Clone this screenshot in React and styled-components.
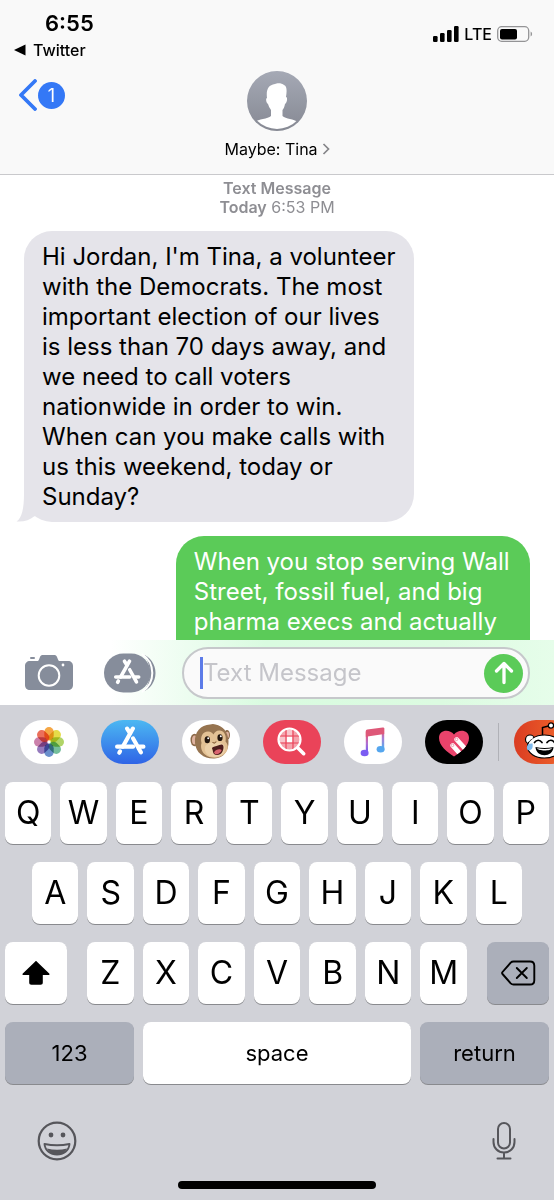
import React, { useState } from 'react';
import styled, { createGlobalStyle } from 'styled-components';

const GlobalStyle = createGlobalStyle`
	* {
		box-sizing: border-box;
	}
	body {
		margin: 0;
		background: #fff;
		color: #000;
		font-family: Inter, "Liberation Sans", sans-serif;
	}
	button, input {
		margin: 0;
		padding: 0;
		border: 0;
		background: none;
		color: inherit;
		font-family: inherit;
	}
	a {
		color: inherit;
		text-decoration: none;
	}
	svg {
		display: block;
		flex: none;
	}
`;

const Screen = styled.div`
	display: flex;
	flex-direction: column;
	height: 100vh;
	overflow: hidden;
`;

const Header = styled.header`
	flex: none;
	background: #f9f9f9;
	border-bottom: 1px solid #c9c9cc;
`;

const StatusBar = styled.div`
	display: flex;
	justify-content: space-between;
	padding: 9px 21px 0 14px;
`;

const Clock = styled.div`
	padding-left: 31px;
	font-size: 22px;
	line-height: 28px;
	font-weight: 600;
`;

const ReturnLink = styled.a`
	display: flex;
	align-items: center;
	gap: 7px;
	font-size: 16px;
	line-height: 26px;
	font-weight: 500;
`;

const Signals = styled.div`
	display: flex;
	align-items: center;
	gap: 5px;
	height: 16px;
	margin-top: 17px;
	font-size: 16px;
	line-height: 16px;
	font-weight: 500;
`;

const NavBar = styled.nav`
	display: grid;
	grid-template-columns: 1fr auto 1fr;
	padding: 8px 18px 14px;
`;

const BackLink = styled.a`
	display: flex;
	align-items: center;
	align-self: start;
	justify-self: start;
	gap: 1px;
	height: 48px;
`;

const Unread = styled.span`
	width: 27px;
	border-radius: 50%;
	background: #3478f6;
	color: #fff;
	font-size: 18px;
	line-height: 27px;
	text-align: center;
`;

const Contact = styled.button`
	display: flex;
	flex-direction: column;
	align-items: center;
	gap: 7px;
`;

const ContactName = styled.span`
	display: flex;
	align-items: center;
	gap: 4px;
	font-size: 16px;
	line-height: 22px;
`;

const Conversation = styled.main`
	flex: 1;
	display: flex;
	flex-direction: column;
	min-height: 0;
	padding: 4px 24px 0;
	overflow: hidden;
`;

const Stamp = styled.div`
	flex: none;
	margin-bottom: 14px;
	color: #8e8e93;
	font-size: 16px;
	line-height: 19px;
	text-align: center;

	strong {
		font-weight: 600;
	}
`;

const Bubble = styled.div`
	position: relative;
	flex: none;
	align-self: ${({ sent }) => (sent ? 'flex-end' : 'flex-start')};
	width: ${({ sent }) => (sent ? '70%' : '77%')};
	margin-bottom: 14px;
	padding: 11px 16px 10px 18px;
	border-radius: ${({ sent }) => (sent ? '28px 28px 0 0' : '28px')};
	background: ${({ sent }) => (sent ? '#5bcb58' : '#e5e4ea')};
	color: ${({ sent }) => (sent ? '#fff' : '#000')};
	font-size: 24px;
	line-height: 30px;
`;

const Tail = styled.svg`
	position: absolute;
	left: -8px;
	bottom: 0;
`;

const ComposeBar = styled.form`
	flex: none;
	display: flex;
	align-items: center;
	padding: 7px 24px 6px 25px;
	background: linear-gradient(to right, #fff 20%, #d9fbe0 48%, #dcfbe1 80%, #e6fdea);
`;

const ToolButton = styled.button`
	margin-right: ${({ gap }) => gap}px;
`;

const Field = styled.label`
	flex: 1;
	display: flex;
	align-items: center;
	min-width: 0;
	height: 52px;
	padding: 0 5px 0 16px;
	border: 2px solid #c6c8cb;
	border-radius: 26px;
	background: #fafafa;
`;

const Caret = styled.span`
	width: 3px;
	height: 32px;
	background: #5c7be8;
`;

const TextInput = styled.input`
	flex: 1;
	min-width: 0;
	font-size: 24px;
	line-height: 30px;
	outline: none;

	&::placeholder {
		color: #c5c5ca;
		opacity: 1;
	}
`;

const SendButton = styled.button`
	display: grid;
	place-items: center;
	width: 39px;
	height: 39px;
	border-radius: 50%;
	background: #5bcb58;
`;

const Keyboard = styled.section`
	flex: none;
	background: #d1d2d8;
`;

const AppStrip = styled.div`
	display: flex;
	align-items: center;
	gap: 23px;
	padding: 15px 0 18px 20px;
	overflow: hidden;
`;

const AppButton = styled.button`
	flex: none;
	display: grid;
	place-items: center;
	width: 58px;
	height: 44px;
	border-radius: 22px;
	background: ${({ fill }) => fill};
	overflow: hidden;
`;

const Divider = styled.span`
	flex: none;
	width: 1px;
	height: 38px;
	margin: 0 -8px;
	background: #b0b1b7;
`;

const KeyRows = styled.div`
	display: flex;
	flex-direction: column;
	gap: 18px;
	padding: 0 5px;
`;

const KeyRow = styled.div`
	display: flex;
	gap: ${({ gap }) => gap || 9}px;
	padding: 0 ${({ inset }) => inset || 0}px;
`;

const Letters = styled.div`
	flex: 1;
	display: flex;
	gap: 9px;
`;

const Key = styled.button`
	flex: ${({ size }) => (size ? `0 0 ${size}px` : '1 1 0')};
	display: grid;
	place-items: center;
	min-width: 0;
	height: 62px;
	border-radius: 8px;
	background: ${({ dark }) => (dark ? '#abafba' : '#fff')};
	box-shadow: 0 1px 0 #898a8e;
	font-size: ${({ word }) => (word ? 22 : 32)}px;
	line-height: 40px;
`;

const KeyboardFooter = styled.div`
	display: flex;
	align-items: center;
	justify-content: space-between;
	padding: 37px 38px 0 37px;
`;

const HomeIndicator = styled.div`
	width: 198px;
	height: 8px;
	margin: 20px auto 11px;
	border-radius: 4px;
	background: #000;
`;

const SignalIcon = () => (
	<svg width="26" height="16" viewBox="0 0 26 16">
		<rect x="0" y="10" width="4.6" height="6" rx="1.2" />
		<rect x="7" y="7" width="4.6" height="9" rx="1.2" />
		<rect x="14" y="4" width="4.6" height="12" rx="1.2" />
		<rect x="21" y="0" width="4.6" height="16" rx="1.2" />
	</svg>
);

const BatteryIcon = () => (
	<svg width="36" height="16" viewBox="0 0 36 16">
		<rect x="0.7" y="0.7" width="31" height="14.6" rx="4" fill="none" stroke="#949496" strokeWidth="1.3" />
		<rect x="3" y="3" width="17" height="10.4" rx="2" />
		<path d="M33.6 5.5v5c2-1 2-4 0-5z" fill="#949496" />
	</svg>
);

const Avatar = () => (
	<svg width="60" height="60" viewBox="0 0 60 60">
		<defs>
			<linearGradient id="avatar" x1="0" y1="0" x2="0" y2="1">
				<stop offset="0" stopColor="#a5a9b5" />
				<stop offset="1" stopColor="#868993" />
			</linearGradient>
			<clipPath id="avatarRing"><circle cx="30" cy="30" r="28" /></clipPath>
		</defs>
		<circle cx="30" cy="30" r="30" fill="url(#avatar)" />
		<path
			clipPath="url(#avatarRing)"
			fill="#fff"
			d="M20 27c-1-8 1-13 8-14 2-1 7-1 9 1 3 1 3 6 2 12 2 0 1 6-1 7-.5 3-1.5 5-2.5 6v6c3 3 12 3 15 6l-5 10H15L8 51c3-3 13-3 16-6v-6c-1.5-2-2.5-4-3-6-2-1-2.5-6-1-6z"
		/>
	</svg>
);

const StoreGlyph = ({ size, cx, cy }) => (
	<g
		transform={`translate(${cx - size / 2} ${cy - size / 2}) scale(${size / 30})`}
		fill="none"
		stroke="#fff"
		strokeWidth="4"
		strokeLinecap="round"
	>
		<path d="M17.8 3L8 20.5" />
		<path d="M12.2 3L15 7.5M18 12.500L25.500 26" />
		<path d="M2.500 20.500h15.500M24 20.500h4" />
		<path d="M5.400 25l-.8 1.400" />
	</g>
);

const CameraIcon = () => (
	<svg width="48" height="38" viewBox="0 0 48 38">
		<g fill="#868d9b">
			<rect x="5" y="3" width="5" height="2" rx="1" />
			<path d="M5 7h7c1 0 1.600-.6 2-1.600l1-2.400C15.600 1.600 16.500 1 18 1h11c1.500 0 2.400.6 3 2l1 2.400C33.400 6.400 34 7 35 7h8c3 0 5 2 5 5v19c0 3-2 5-5 5H5c-3 0-5-2-5-5V12c0-3 2-5 5-5z" />
		</g>
		<circle cx="24" cy="21.500" r="10.300" fill="none" stroke="#fff" strokeWidth="2" />
		<circle cx="38" cy="11" r="1.400" fill="#fff" />
	</svg>
);

const DrawerIcon = () => (
	<svg width="53" height="40" viewBox="0 0 53 40">
		<path d="M39 1.500c7 2 12.500 10 12.500 18.500s-5.500 16.500-12.500 18.500c9-8 9-29 0-37z" fill="#868d9b" />
		<rect x="0" y="0.600" width="46.500" height="38.800" rx="19.400" fill="#868d9b" />
		<path d="M38 1c6 4 10.300 11 10.300 19S44 35 38 39" fill="none" stroke="#fff" strokeWidth="2" />
		<StoreGlyph size={27} cx={23} cy={19} />
	</svg>
);

const PhotosIcon = () => {
	const petals = ['#f49b2b', '#e3d72f', '#a5ce52', '#61b58d', '#5580c4', '#8668b4', '#c470a0', '#e95b44'];
	return (
		<svg width="32" height="32" viewBox="0 0 32 32">
			{petals.map((color, i) => (
				<rect
					key={color}
					x="11.300"
					y="1"
					width="9.400"
					height="13.500"
					rx="4.700"
					fill={color}
					opacity="0.88"
					transform={`rotate(${i * 45} 16 16)`}
					style={{ mixBlendMode: 'multiply' }}
				/>
			))}
		</svg>
	);
};

const StoreIcon = () => (
	<svg width="32" height="32" viewBox="0 0 32 32"><StoreGlyph size={31} cx={16} cy={15} /></svg>
);

const MonkeyIcon = () => (
	<svg width="42" height="38" viewBox="0 0 42 38">
		<ellipse cx="4.500" cy="17" rx="4" ry="6.200" fill="#8a6848" />
		<ellipse cx="4.700" cy="17" rx="2.700" ry="4.600" fill="#dfb3a0" />
		<ellipse cx="37" cy="12" rx="3" ry="5" fill="#8a6848" />
		<ellipse cx="37.300" cy="12" rx="1.700" ry="3.300" fill="#dfb3a0" />
		<path d="M5 20C4 9 11 2 20 1.600c2-.8 4-.8 5.500 0C33 3 38 9 38.500 18c.5 10-5 17-14 17.500C14 36 6 30 5 20z" fill="#967450" />
		<path d="M11.500 20c-1.500-6 1-11.500 6.500-11.500 3 0 4.500 1.500 5.500 3 1-2.500 3.500-4.500 6.500-4 5 .8 6.500 6 5.500 11 3 3 3 8 0 11.500-5 6-15 6-20.500 1.500-4-3.500-4.500-8-3.500-11.500z" fill="#e3c194" />
		<path d="M15 24c2-5 14-7 19-2 3 5-1 12-8.500 12S14 30 15 24z" fill="#ecd0a8" />
		<ellipse cx="17.300" cy="16.700" rx="2.700" ry="3.500" fill="#22150d" />
		<ellipse cx="30" cy="14.700" rx="2.600" ry="3.400" fill="#22150d" />
		<circle cx="18.200" cy="15.300" r="1" fill="#fff" />
		<circle cx="30.800" cy="13.300" r="1" fill="#fff" />
		<path d="M22.800 19.500l1.600.6 1.600-1.200" fill="none" stroke="#8a6038" strokeWidth="1.100" strokeLinecap="round" />
		<path d="M22 25.500c0-1.500 2-2 4.500-2.500 3-.8 5.500-2.500 6.500-.8 1.300 2.500 0 6.800-2.500 8.800-2.500 1.600-6 1.300-7-.8-.8-1.700-.5-3.200-1.500-4.700z" fill="#4d1d1c" />
		<path d="M24 29.500c1.300-2.700 5.500-4 7.700-2.500-1 3.700-6.500 6-7.700 2.500z" fill="#d9646f" />
	</svg>
);

const SearchIcon = () => (
	<svg width="30" height="30" viewBox="0 0 30 30">
		<circle cx="12.500" cy="12.500" r="11" fill="#f4a3ad" />
		<path d="M9.500 9.500h6v6h-6z" fill="#fff" />
		<path d="M3 9.500h6v6H3zM9.500 3h6v6h-6z" fill="#f9c6cd" />
		<path d="M9 1.500v22M16 1.500v22M1.500 9h22M1.500 16h22" stroke="#ea4359" strokeWidth="1.200" />
		<circle cx="12.500" cy="12.500" r="11" fill="none" stroke="#fff" strokeWidth="2.200" />
		<path d="M20.700 20.700l6 6" stroke="#fff" strokeWidth="3.600" strokeLinecap="round" />
	</svg>
);

const MusicIcon = () => (
	<svg width="26" height="30" viewBox="0 0 26 30">
		<defs>
			<linearGradient id="noteLeft" x1="0" y1="0" x2="0" y2="1">
				<stop offset="0.100" stopColor="#e85573" />
				<stop offset="0.550" stopColor="#b06fd0" />
				<stop offset="1" stopColor="#6a5cf6" />
			</linearGradient>
			<linearGradient id="noteRight" x1="0" y1="0" x2="0" y2="1">
				<stop offset="0.100" stopColor="#e85573" />
				<stop offset="0.500" stopColor="#a77fd6" />
				<stop offset="1" stopColor="#4fb0f0" />
			</linearGradient>
		</defs>
		<path d="M5.800 4.500H8V26H5.800z" fill="url(#noteLeft)" />
		<ellipse cx="4.600" cy="26" rx="4" ry="3.300" fill="#7b5cf2" />
		<path d="M21.800 1h2.400v21h-2.400z" fill="url(#noteRight)" />
		<ellipse cx="20.600" cy="22.300" rx="4" ry="3.300" fill="#55a6ee" />
		<path d="M7.300 2.600L22.700 .4c1-.1 1.500.3 1.500 1.200v5.500L5.800 9.700V4.500c0-1.100.5-1.700 1.500-1.900z" fill="#de5878" />
	</svg>
);

const HeartIcon = () => (
	<svg width="32" height="30" viewBox="0 0 32 30">
		<defs>
			<clipPath id="heart">
				<path d="M16 29.500C9 25 1 18.500 1 11 1 3 11 1.500 16 7.500 21 1.500 31 3 31 11c0 7.500-8 14-15 18.500z" />
			</clipPath>
		</defs>
		<g clipPath="url(#heart)">
			<rect width="32" height="30" fill="#e9436b" />
			<path d="M18.700 12.500l10 11M14.700 18.500l8 9" stroke="#fff" strokeWidth="4.800" strokeLinecap="round" />
			<circle cx="18.500" cy="12.300" r="1.300" fill="none" stroke="#e27c95" strokeWidth="0.700" />
			<circle cx="14.500" cy="18.300" r="1.300" fill="none" stroke="#e27c95" strokeWidth="0.700" />
		</g>
	</svg>
);

const RobotIcon = () => (
	<svg width="58" height="44" viewBox="0 0 58 44">
		<path d="M28.500 15V7.500l6-1.500" fill="none" stroke="#000" strokeWidth="1.500" />
		<circle cx="37" cy="5.500" r="2.600" fill="#fff" stroke="#000" strokeWidth="1.300" />
		<circle cx="16" cy="19.500" r="4.500" fill="#fff" stroke="#000" strokeWidth="1.200" />
		<circle cx="45" cy="19.500" r="4.500" fill="#fff" stroke="#000" strokeWidth="1.200" />
		<ellipse cx="30.500" cy="26.500" rx="17" ry="11.500" fill="#fff" stroke="#000" strokeWidth="1.200" />
		<path d="M13.500 21a16 11 0 0 1 5-4" fill="none" stroke="#fff" strokeWidth="3" />
		<path d="M20.500 22.500c2-3 5.500-3 7.500 0M33 22.500c2-3 5.500-3 7.500 0" fill="none" stroke="#000" strokeWidth="1.700" strokeLinecap="round" />
		<path d="M21.500 27c6 1.300 12 1.300 18 0-.5 11-17.500 11-18 0z" fill="#000" />
		<path d="M23 28.300c5 1 10 1 15 0-1 3-14 3-15 0z" fill="#fff" />
		<path d="M18.500 23.500c-5.500-.5-6.500 3.500-5 6.500 3.500 1 6-1.500 5-6.500z" fill="#7eb9ec" />
	</svg>
);

const ShiftIcon = () => (
	<svg width="30" height="26" viewBox="0 0 30 26">
		<path d="M14.300 1.400c.4-.4 1-.4 1.400 0l12.500 12c.6.6.3 1.600-.6 1.600h-5.800v7.600c0 1.400-.8 2.200-2.200 2.200h-9.200c-1.400 0-2.200-.8-2.200-2.200V15H2.400c-.9 0-1.200-1-.6-1.600z" />
	</svg>
);

const DeleteIcon = () => (
	<svg width="35" height="26" viewBox="0 0 35 26" fill="none" stroke="#000" strokeWidth="1.900" strokeLinecap="round" strokeLinejoin="round">
		<path d="M12.500 1.500H29c2.600 0 4.300 1.700 4.300 4.300v14.400c0 2.600-1.700 4.300-4.300 4.300H12.500c-1.200 0-2-.4-2.800-1.200L1.500 14c-.6-.7-.6-1.300 0-2l8.200-9.300c.8-.8 1.600-1.200 2.800-1.200z" />
		<path d="M15.800 8l10 10M25.800 8l-10 10" />
	</svg>
);

const SmileIcon = () => (
	<svg width="40" height="40" viewBox="0 0 40 40">
		<circle cx="20" cy="20" r="18.300" fill="none" stroke="#56565b" strokeWidth="2.200" />
		<circle cx="14" cy="14" r="2.400" fill="#56565b" />
		<circle cx="26" cy="14" r="2.400" fill="#56565b" />
		<path d="M7.500 23c8 1.600 17 1.600 25 0C32 29.500 26.500 33.500 20 33.500S8 29.500 7.500 23z" fill="none" stroke="#56565b" strokeWidth="1.900" strokeLinejoin="round" />
		<path d="M10 27.500c6.500 1.700 13.500 1.700 20 0-2 4-5.500 6-10 6s-8-2-10-6z" fill="#56565b" />
	</svg>
);

const MicIcon = () => (
	<svg width="24" height="38" viewBox="0 0 24 38" fill="none" stroke="#56565b" strokeWidth="2" strokeLinecap="round">
		<rect x="6" y="1" width="12" height="25.500" rx="6" />
		<path d="M1.500 17v3c0 6 4.500 10.500 10.500 10.500S22.500 26 22.500 20v-3M12 30.500V36.500M5.500 36.500h13" />
	</svg>
);

const apps = [
	{ name: 'Photos', fill: '#fff', icon: <PhotosIcon /> },
	{ name: 'App Store', fill: 'linear-gradient(#4cb8f2, #2f64e6)', icon: <StoreIcon /> },
	{ name: 'Animoji', fill: '#fff', icon: <MonkeyIcon /> },
	{ name: 'Images', fill: '#ea4359', icon: <SearchIcon /> },
	{ name: 'Music', fill: '#fff', icon: <MusicIcon /> },
	{ name: 'Digital Touch', fill: '#000', icon: <HeartIcon /> },
];

const renderKeys = letters => letters.split('').map(letter => (
	<Key key={letter} type="button">{letter}</Key>
));

const App = () => {
	const [message, setMessage] = useState('');

	return (
		<Screen>
			<GlobalStyle />
			<Header>
				<StatusBar>
					<div>
						<Clock>6:55</Clock>
						<ReturnLink href="#twitter">
							<svg width="12" height="12" viewBox="0 0 12 12"><path d="M0 6L11.500 .5v11z" /></svg>
							Twitter
						</ReturnLink>
					</div>
					<Signals>
						<SignalIcon />
						LTE
						<BatteryIcon />
					</Signals>
				</StatusBar>
				<NavBar>
					<BackLink href="#messages" aria-label="Back, 1 unread">
						<svg width="19" height="32" viewBox="0 0 19 32">
							<path d="M17 2L3 16l14 14" fill="none" stroke="#3478f6" strokeWidth="3.800" strokeLinecap="round" strokeLinejoin="round" />
						</svg>
						<Unread>1</Unread>
					</BackLink>
					<Contact type="button">
						<Avatar />
						<ContactName>
							Maybe: Tina
							<svg width="8" height="12" viewBox="0 0 8 12">
								<path d="M1.500 1l5 5-5 5" fill="none" stroke="#858589" strokeWidth="1.700" />
							</svg>
						</ContactName>
					</Contact>
				</NavBar>
			</Header>

			<Conversation>
				<Stamp>
					<strong>Text Message</strong>
					<br />
					<strong>Today</strong>
					{' 6:53 PM'}
				</Stamp>
				<Bubble>
					Hi Jordan, I&apos;m Tina, a volunteer with the Democrats. The most important
					election of our lives is less than 70 days away, and we need to call voters
					nationwide in order to win. When can you make calls with us this weekend,
					today or Sunday?
					<Tail width="30" height="28" viewBox="0 0 30 28">
						<path d="M8 0C8 14 6 24 .5 27.500 8 28 14 26 18 22.500L24 20V0z" fill="#e5e4ea" />
					</Tail>
				</Bubble>
				<Bubble sent>
					When you stop serving Wall Street, fossil fuel, and big pharma execs and
					actually
				</Bubble>
			</Conversation>

			<ComposeBar onSubmit={e => e.preventDefault()}>
				<ToolButton type="button" gap={31} aria-label="Camera"><CameraIcon /></ToolButton>
				<ToolButton type="button" gap={25} aria-label="Apps"><DrawerIcon /></ToolButton>
				<Field>
					<Caret />
					<TextInput
						type="text"
						placeholder="Text Message"
						aria-label="Text Message"
						value={message}
						onChange={e => setMessage(e.target.value)}
					/>
					<SendButton type="submit" aria-label="Send">
						<svg width="20" height="24" viewBox="0 0 20 24">
							<path d="M10 21.500V2.500M2.500 10L10 2.500l7.500 7.500" fill="none" stroke="#fff" strokeWidth="3.300" strokeLinecap="round" strokeLinejoin="round" />
						</svg>
					</SendButton>
				</Field>
			</ComposeBar>

			<Keyboard>
				<AppStrip>
					{apps.map(({ name, fill, icon }) => (
						<AppButton key={name} type="button" fill={fill} aria-label={name}>{icon}</AppButton>
					))}
					<Divider />
					<AppButton type="button" fill="linear-gradient(to right, #da3c22, #f26a2c)" aria-label="Stickers">
						<RobotIcon />
					</AppButton>
				</AppStrip>
				<KeyRows>
					<KeyRow>{renderKeys('QWERTYUIOP')}</KeyRow>
					<KeyRow inset={27}>{renderKeys('ASDFGHJKL')}</KeyRow>
					<KeyRow gap={20}>
						<Key type="button" size={62} aria-label="Shift"><ShiftIcon /></Key>
						<Letters>{renderKeys('ZXCVBNM')}</Letters>
						<Key type="button" size={62} dark aria-label="Delete"><DeleteIcon /></Key>
					</KeyRow>
					<KeyRow>
						<Key type="button" size={129} dark word>123</Key>
						<Key type="button" word>space</Key>
						<Key type="button" size={129} dark word>return</Key>
					</KeyRow>
				</KeyRows>
				<KeyboardFooter>
					<button type="button" aria-label="Emoji"><SmileIcon /></button>
					<button type="button" aria-label="Dictate"><MicIcon /></button>
				</KeyboardFooter>
				<HomeIndicator />
			</Keyboard>
		</Screen>
	);
};

export default App;
